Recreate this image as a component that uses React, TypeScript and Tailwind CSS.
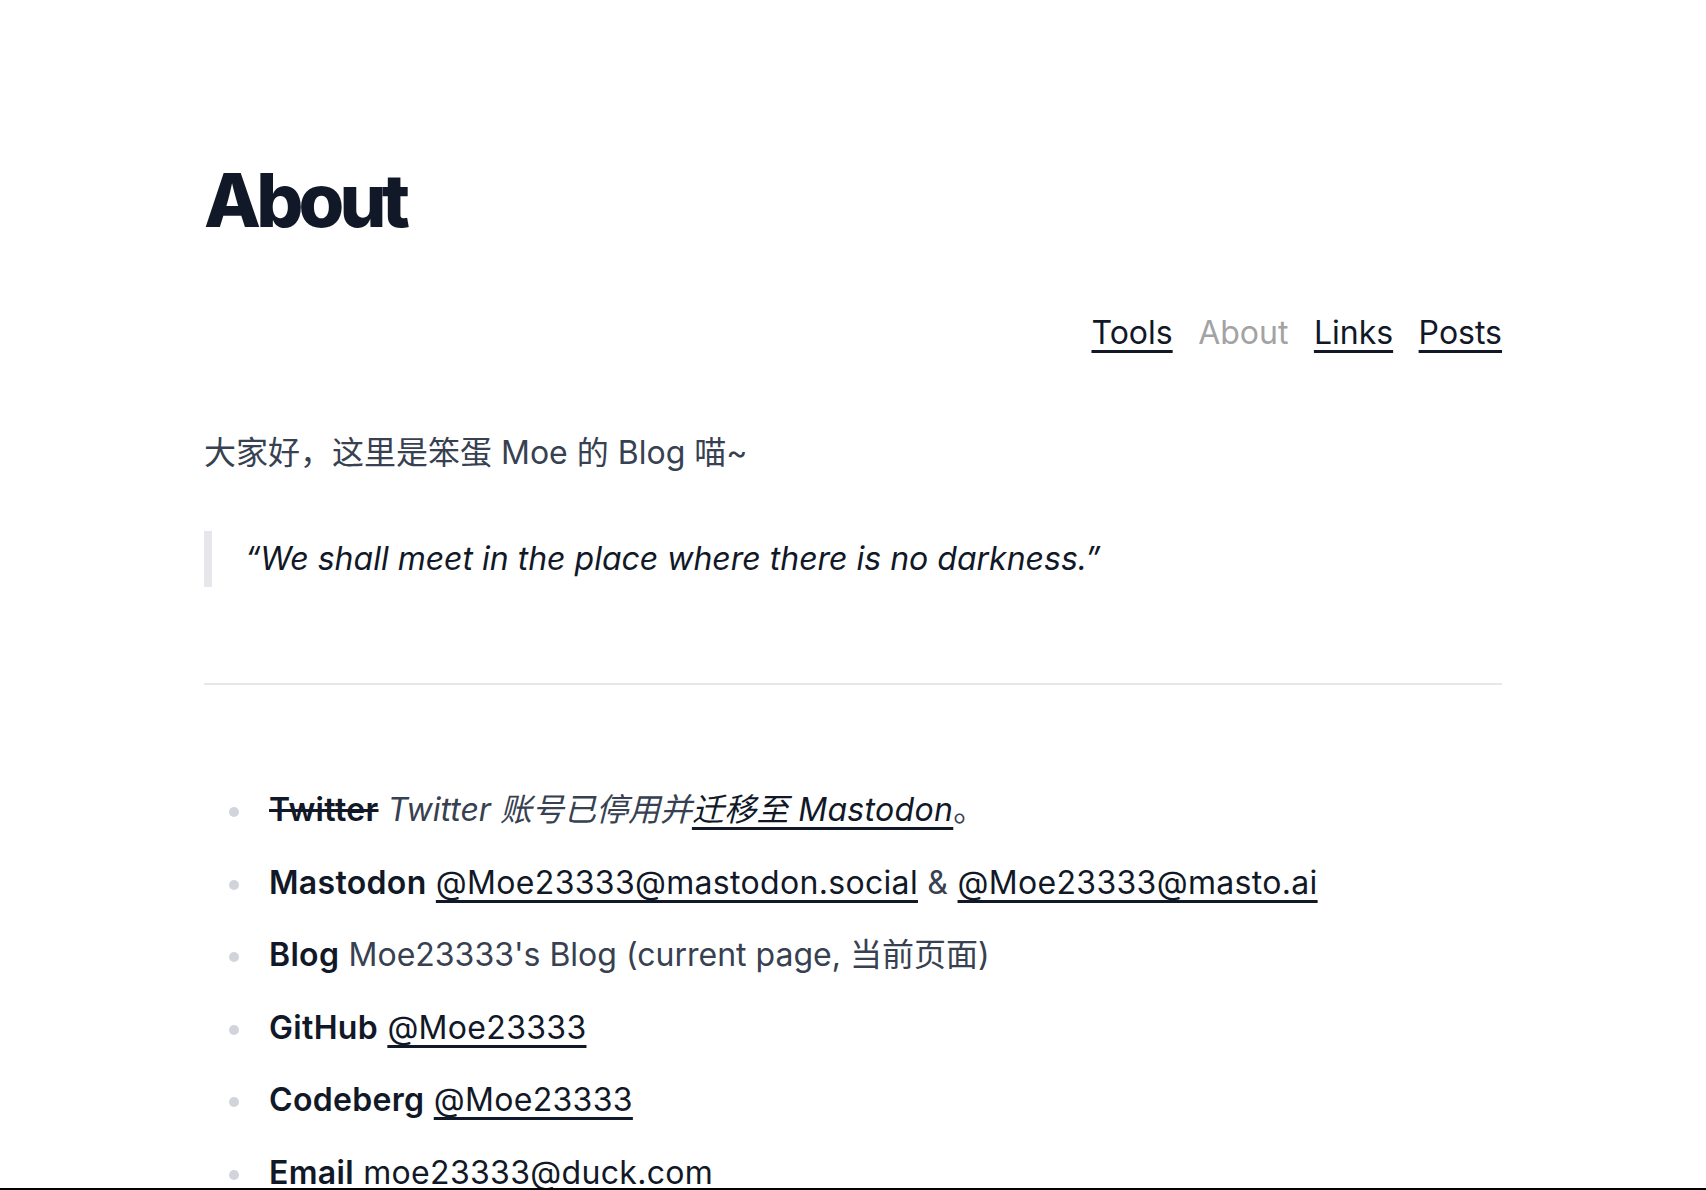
import React from "react";

const sans = "font-['Inter','Noto_Sans_CJK_SC',sans-serif]";

const navItems = [
  { label: "Tools", active: false },
  { label: "About", active: true },
  { label: "Links", active: false },
  { label: "Posts", active: false },
];

const Link = ({ children, italic }: { children: React.ReactNode; italic?: boolean }) => (
  <a
    href="#"
    className={`text-[#111827] underline decoration-[2.5px] underline-offset-[6px] [text-decoration-skip-ink:none] ${italic ? "italic" : ""}`}
  >
    {children}
  </a>
);

const Item = ({ children }: { children: React.ReactNode }) => (
  <li className="flex items-start">
    <span className="ml-[25px] mt-[25px] size-[10px] shrink-0 rounded-full bg-[#d1d5db]" />
    <div className="ml-[30px]">{children}</div>
  </li>
);

export default function App() {
  return (
    <div className={`min-h-screen bg-white ${sans} text-[#374151]`}>
      <main className="mx-auto w-[1298px] pt-[163px] pb-20">
        <h1 className="text-[74px] font-extrabold leading-none tracking-[-0.065em] text-[#111827]">
          About
        </h1>

        <nav className="mt-[72px] flex justify-end gap-[25.5px] text-[32px] leading-[48px]">
          {navItems.map((item) =>
            item.active ? (
              <span key={item.label} className="text-[#a3a3a3]">
                {item.label}
              </span>
            ) : (
              <a
                key={item.label}
                href="#"
                className="text-[#111827] underline decoration-[2.5px] underline-offset-[6px] [text-decoration-skip-ink:none]"
              >
                {item.label}
              </a>
            ),
          )}
        </nav>

        <p className="mt-[68px] text-[32px] leading-[56px]">
          大家好，这里是笨蛋 Moe 的 Blog 喵~
        </p>

        <blockquote className="mt-[50px] border-l-[8px] border-[#e5e7eb] pl-[33px] text-[32px] italic leading-[56px] text-[#111827]">
          “We shall meet in the place where there is no darkness.”
        </blockquote>

        <hr className="mt-[96px] border-t-2 border-[#e5e7eb]" />

        <ul className="mt-[97px] space-y-[16.6px] text-[32px] leading-[56px] tracking-[0.01em]">
          <Item>
            <span className="font-semibold text-[#111827] line-through">Twitter</span>{" "}
            <span className="italic tracking-normal">Twitter 账号已停用并</span>
            <Link italic>迁移至 Mastodon</Link>。
          </Item>
          <Item>
            <span className="font-semibold text-[#111827]">Mastodon</span>{" "}
            <Link>@Moe23333@mastodon.social</Link> &amp; <Link>@Moe23333@masto.ai</Link>
          </Item>
          <Item>
            <span className="font-semibold text-[#111827]">Blog</span>{" "}
            <span className="tracking-normal">Moe23333's Blog (current page, 当前页面)</span>
          </Item>
          <Item>
            <span className="font-semibold text-[#111827]">GitHub</span> <Link>@Moe23333</Link>
          </Item>
          <Item>
            <span className="font-semibold text-[#111827]">Codeberg</span> <Link>@Moe23333</Link>
          </Item>
          <Item>
            <span className="font-semibold text-[#111827]">Email</span>{" "}
            <span className="text-[#111827]">moe23333@duck.com</span>
          </Item>
        </ul>
      </main>
      <div className="fixed inset-x-0 bottom-0 h-[2px] bg-black" />
    </div>
  );
}
